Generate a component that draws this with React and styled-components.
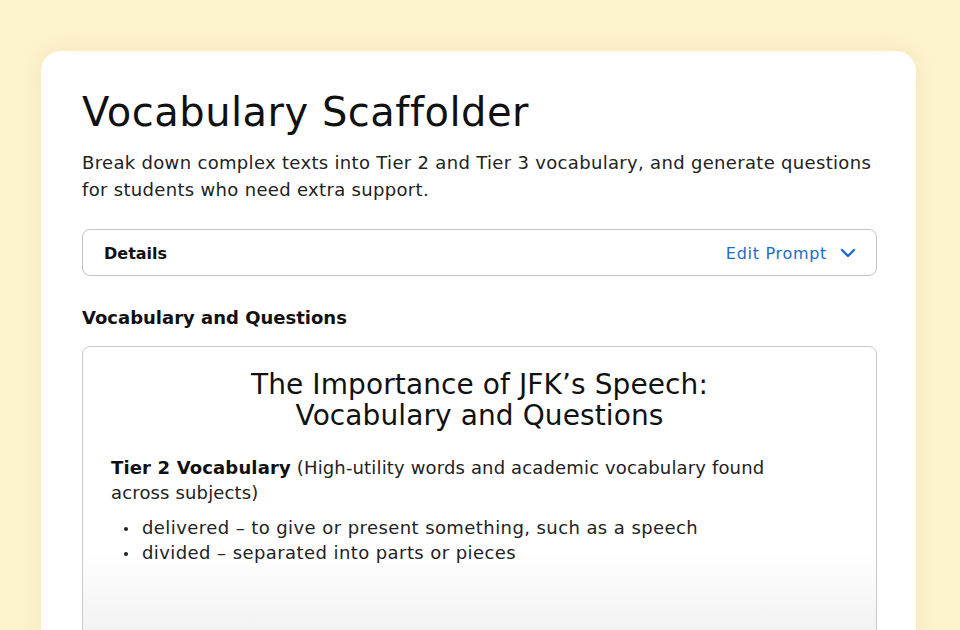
import React from 'react';
import styled, { createGlobalStyle } from 'styled-components';

const GlobalStyle = createGlobalStyle`
  html, body {
    margin: 0;
    padding: 0;
    background: #fdf3cf;
    overflow: hidden;
  }
  * {
    box-sizing: border-box;
  }
`;

const Page = styled.div`
  width: 960px;
  height: 630px;
  padding: 51px 44px 0 41px;
  background: #fdf3cf;
  overflow: hidden;
  font-family: 'DejaVu Sans', 'Liberation Sans', sans-serif;
  color: #111;
`;

const Card = styled.div`
  background: #fff;
  border-radius: 20px;
  padding: 37px 39px 0 41px;
  height: 640px;
  box-shadow: 0 0 24px rgba(200, 170, 80, 0.18);
`;

const Title = styled.h1`
  margin: 0;
  font-size: 40px;
  font-weight: 400;
  letter-spacing: 0.5px;
  line-height: 48px;
`;

const Description = styled.p`
  margin: 13px 0 0;
  font-size: 18px;
  letter-spacing: 0.32px;
  line-height: 27px;
  color: #222;
`;

const DetailsBar = styled.div`
  margin-top: 26px;
  height: 47px;
  display: flex;
  align-items: center;
  justify-content: space-between;
  padding: 0 20px 0 21px;
  border: 1.5px solid #c4c4c4;
  border-radius: 8px;
`;

const DetailsLabel = styled.span`
  font-size: 16px;
  font-weight: 700;
  margin-top: 1px;
`;

const EditButton = styled.button`
  display: flex;
  align-items: center;
  gap: 13px;
  border: none;
  background: none;
  padding: 0;
  margin-top: 1px;
  font-family: inherit;
  font-size: 16px;
  font-weight: 400;
  letter-spacing: 0.7px;
  color: #1a6dcc;
  cursor: pointer;
`;

const SectionTitle = styled.h2`
  margin: 30px 0 0;
  font-size: 18px;
  font-weight: 700;
  line-height: 24px;
`;

const Output = styled.div`
  margin-top: 16px;
  height: 320px;
  border: 1.5px solid #c9c9c9;
  border-radius: 8px;
  padding: 22px 28px 0 28px;
  background: linear-gradient(to bottom, #fff 0, #fff 205px, #f2f2f2 285px);
`;

const DocTitle = styled.h3`
  margin: 0;
  text-align: center;
  font-size: 28px;
  font-weight: 400;
  letter-spacing: 0.1px;
  line-height: 31px;
  color: #111;
`;

const Paragraph = styled.p`
  margin: 24px 0 0;
  max-width: 700px;
  font-size: 18px;
  letter-spacing: 0.15px;
  line-height: 25px;
  color: #222;
`;

const Strong = styled.strong`
  font-weight: 700;
  color: #111;
`;

const List = styled.ul`
  margin: 10px 0 0;
  padding: 0 0 0 13px;
  list-style: none;
  font-size: 18px;
  letter-spacing: 0.42px;
  line-height: 25px;
  color: #222;
`;

const Item = styled.li`
  display: flex;
  align-items: center;
  gap: 14px;

  &::before {
    content: '';
    width: 4px;
    height: 4px;
    border-radius: 50%;
    background: #222;
    flex-shrink: 0;
    margin-top: 2px;
  }
`;

const Chevron = () => (
  <svg width="16" height="10" viewBox="0 0 16 10" fill="none">
    <path d="M2 2l6 6 6-6" stroke="#1a6dcc" strokeWidth="2.4" strokeLinecap="round" strokeLinejoin="round" />
  </svg>
);

export default function App() {
  return (
    <Page>
      <GlobalStyle />
      <Card>
        <Title>Vocabulary Scaffolder</Title>
        <Description>
          Break down complex texts into Tier 2 and Tier 3 vocabulary, and generate questions
          for students who need extra support.
        </Description>
        <DetailsBar>
          <DetailsLabel>Details</DetailsLabel>
          <EditButton>
            Edit Prompt
            <Chevron />
          </EditButton>
        </DetailsBar>
        <SectionTitle>Vocabulary and Questions</SectionTitle>
        <Output>
          <DocTitle>
            The Importance of JFK’s Speech:
            <br />
            Vocabulary and Questions
          </DocTitle>
          <Paragraph>
            <Strong>Tier 2 Vocabulary</Strong> (High-utility words and academic vocabulary found
            across subjects)
          </Paragraph>
          <List>
            <Item>delivered – to give or present something, such as a speech</Item>
            <Item>divided – separated into parts or pieces</Item>
          </List>
        </Output>
      </Card>
    </Page>
  );
}
